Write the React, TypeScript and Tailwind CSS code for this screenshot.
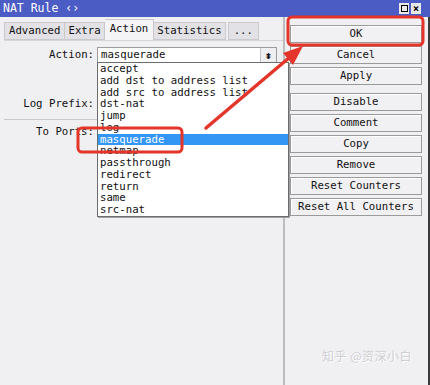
import React from "react";

const mono = { fontFamily: '"DejaVu Sans Mono", "Liberation Mono", monospace' };

const items = [
  "accept",
  "add dst to address list",
  "add src to address list",
  "dst-nat",
  "jump",
  "log",
  "masquerade",
  "netmap",
  "passthrough",
  "redirect",
  "return",
  "same",
  "src-nat",
];

function Btn({ label, className = "" }: { label: string; className?: string }) {
  return (
    <div
      className={
        "h-[18px] flex items-center justify-center border border-[#9a9a9a] bg-[#f1f0f3] text-[10.7px] text-[#111] shadow-[inset_1px_1px_0_#ffffff] " +
        className
      }
    >
      {label}
    </div>
  );
}

export default function App() {
  return (
    <div
      className="relative w-[430px] h-[385px] overflow-hidden bg-[#f0eff2] text-[#111]"
      style={mono}
    >
      {/* Title bar */}
      <div className="h-[17px] bg-[#4b5cc4] flex items-center justify-between pl-[3px] pr-[9px]">
        <span className="text-white text-[11.5px] leading-none">NAT Rule ‹›</span>
        <div className="flex gap-[2px]">
          <div className="w-[10px] h-[11px] bg-[#e8e8e8] flex items-center justify-center">
            <div className="w-[7px] h-[7px] border border-black" />
          </div>
          <div className="w-[10px] h-[11px] bg-[#e8e8e8] flex items-center justify-center text-[10px] font-bold leading-none text-black">
            ×
          </div>
        </div>
      </div>

      <div className="flex h-[368px]">
        {/* Left tab area */}
        <div className="w-[285px] pl-[4px] flex flex-col border-r-2 border-[#bdbcc1]">
          <div className="flex items-end h-[23px] text-[10.7px]">
            <div className="h-[18px] px-[4px] flex items-center bg-[#e2e1e5] border border-[#c9c8cc]">Advanced</div>
            <div className="h-[18px] px-[3px] flex items-center bg-[#e2e1e5] border border-[#c9c8cc] border-l-0">Extra</div>
            <div className="h-[21px] px-[5px] pb-[2px] flex items-center bg-[#f4f3f6] border border-[#c9c8cc] border-b-0 border-l-0">Action</div>
            <div className="h-[18px] px-[3px] flex items-center bg-[#e2e1e5] border border-[#c9c8cc] border-l-0">Statistics</div>
            <div className="h-[18px] px-[5px] ml-[2px] flex items-center bg-[#e2e1e5] border border-[#c9c8cc]">...</div>
          </div>
          <div className="flex-1 flex flex-col text-[10.7px] border-t border-[#d6d5da] pt-[6px]">
            <div className="flex items-center h-[16px]">
              <div className="w-[93px] text-right pr-[3px]">Action:</div>
              <div className="w-[180px] h-[16px] bg-white border border-[#9c9ba0] flex items-center justify-between pl-[3px]">
                <span>masquerade</span>
                <div className="w-[16px] h-[14px] bg-[#efeef1] border-l border-[#c4c3c8] flex items-center justify-center text-[11px] font-bold leading-none">
                  ⇟
                </div>
              </div>
            </div>
            <div className="flex items-center h-[16px] mt-[33px]">
              <div className="w-[93px] text-right pr-[3px]">Log Prefix:</div>
              <div className="w-[180px] h-[16px] bg-white border border-[#9c9ba0]" />
            </div>
            <div className="h-px bg-[#c8c7cc] mt-[7px] mr-[4px]" />
            <div className="flex items-center h-[16px] mt-[4px]">
              <div className="w-[93px] text-right pr-[3px]">To Ports:</div>
              <div className="w-[180px] h-[16px] bg-white border border-[#9c9ba0]" />
            </div>
          </div>
        </div>

        {/* Right buttons */}
        <div className="flex-1 flex flex-col pl-[5px] pr-[6px] pt-[8px] gap-[3px] border-r-2 border-[#3a3a3a]">
          <Btn label="OK" />
          <Btn label="Cancel" />
          <Btn label="Apply" />
          <Btn label="Disable" className="mt-[5px]" />
          <Btn label="Comment" />
          <Btn label="Copy" />
          <Btn label="Remove" />
          <Btn label="Reset Counters" />
          <Btn label="Reset All Counters" />
        </div>
      </div>

      {/* Dropdown list */}
      <div className="absolute left-[97px] top-[62px] w-[192px] bg-white border border-[#6c6b70] text-[10.7px] shadow-[1px_1px_0_#a0a0a0]">
        {items.map((it) => (
          <div
            key={it}
            className={
              "h-[11.75px] leading-[11.75px] pl-[2px] whitespace-nowrap " +
              (it === "masquerade" ? "bg-[#3396f5] text-white" : "")
            }
          >
            {it}
          </div>
        ))}
      </div>

      {/* Watermark */}
      <div
        className="absolute left-[322px] top-[347px] text-[12px] text-[#cfced2] tracking-[0.5px]"
        style={{ fontFamily: '"Noto Sans CJK SC", sans-serif', textShadow: "1px 1px 0 #ffffff" }}
      >
        知乎 @资深小白
      </div>

      {/* Annotations */}
      <svg className="absolute left-0 top-0" width="430" height="385" viewBox="0 0 430 385">
        <rect x="78" y="128" width="104" height="24" rx="4" fill="none" stroke="#e3352a" strokeWidth="3" />
        <rect x="288" y="17" width="135" height="28" rx="4" fill="none" stroke="#e3352a" strokeWidth="3" />
        <line x1="206" y1="128" x2="290" y2="57" stroke="#e3352a" strokeWidth="3.5" strokeLinecap="round" />
        <polygon points="303,46 293,65 283,53" fill="#e3352a" />
      </svg>
    </div>
  );
}
